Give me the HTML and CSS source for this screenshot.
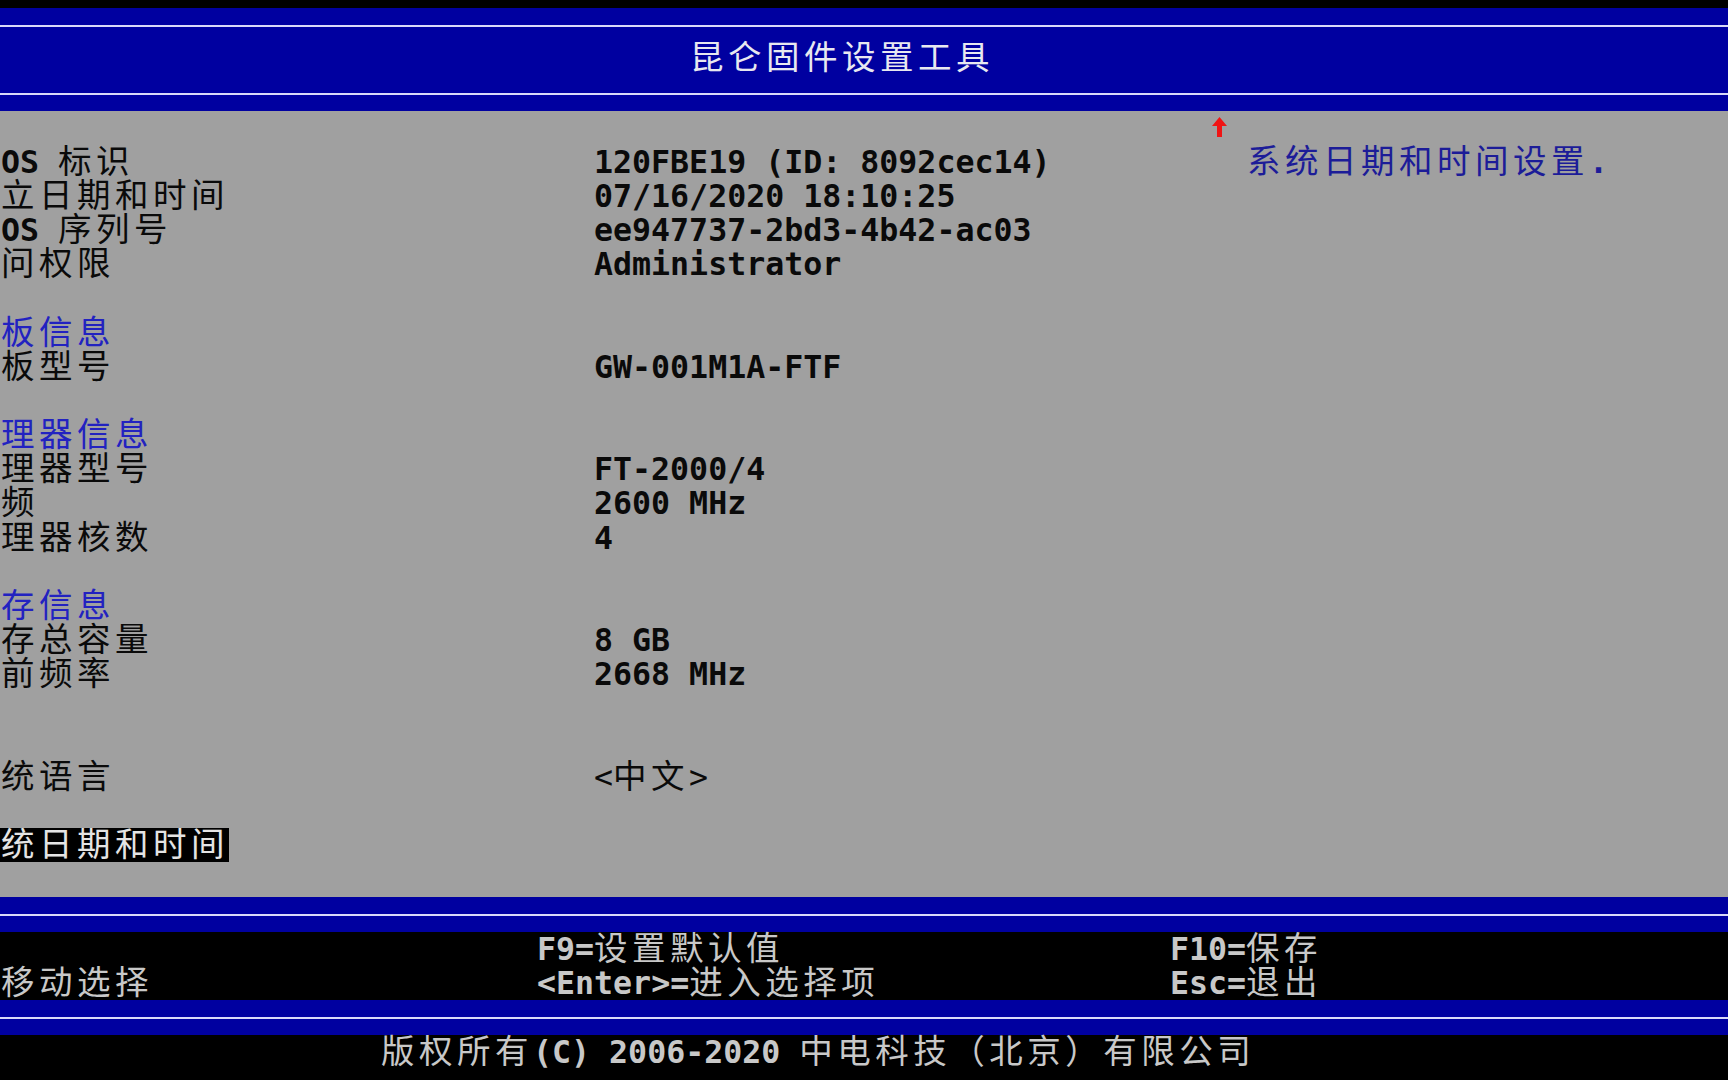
FILE: index.html
```html
<!DOCTYPE html>
<html lang="zh-CN"><head>
  <meta charset="utf-8">
  <title>昆仑固件设置工具</title>
  <link rel="stylesheet" href="styles.css">
</head>
<body>

<div class="screen">
<div class="top-edge"></div>

<header class="title-bar">
  <h1 class="cjk">昆仑固件设置工具</h1>
</header>

<main class="setup">
  <div class="items">
    <div class="label">BIOS <span class="cjk">标识</span></div><div class="value">120FBE19 (ID: 8092cec14)</div>
    <div class="label cjk">建立日期和时间</div><div class="value">07/16/2020 18:10:25</div>
    <div class="label">BIOS <span class="cjk">序列号</span></div><div class="value">ee947737-2bd3-4b42-ac03</div>
    <div class="label cjk">访问权限</div><div class="value">Administrator</div>
    <div class="gap"></div>

    <div class="heading cjk">主板信息</div>
    <div class="label cjk">主板型号</div><div class="value">GW-001M1A-FTF</div>
    <div class="gap"></div>

    <div class="heading cjk">处理器信息</div>
    <div class="label cjk">处理器型号</div><div class="value">FT-2000/4</div>
    <div class="label cjk">主频</div><div class="value">2600 MHz</div>
    <div class="label cjk">处理器核数</div><div class="value">4</div>
    <div class="gap"></div>

    <div class="heading cjk">内存信息</div>
    <div class="label cjk">内存总容量</div><div class="value">8 GB</div>
    <div class="label cjk">当前频率</div><div class="value">2668 MHz</div>
    <div class="gap"></div>
    <div class="gap"></div>

    <div class="label cjk">系统语言</div><div class="value"><span class="thin">&lt;</span><span class="cjk">中文</span><span class="thin">&gt;</span></div>
    <div class="gap"></div>

    <div class="label cjk selected">系统日期和时间</div>
  </div>

  <aside class="help">
    <svg class="scroll-up" viewBox="0 0 15 20"><polygon points="7.5,0 15,9 10,9 10,20 5,20 5,9 0,9" fill="#f01414"/></svg>
    <p><span class="cjk">系统日期和时间设置</span>.</p>
  </aside>
</main>

<footer>
  <div class="band"></div>
  <div class="keys">
    <div></div>
    <div>F9=<span class="cjk">设置默认值</span></div>
    <div>F10=<span class="cjk">保存</span></div>
    <div>&#8593;&#8595;<span class="cjk">移动选择</span></div>
    <div>&lt;Enter&gt;=<span class="cjk">进入选择项</span></div>
    <div>Esc=<span class="cjk">退出</span></div>
  </div>
  <div class="band"></div>
  <div class="copyright"><span class="cjk">版权所有</span>(C) 2006-2020 <span class="cjk">中电科技（北京）有限公司</span></div>
</footer>
</div>

</body></html>
```

FILE: styles.css
```css
html, body { margin:0; padding:0; background:black; }

body {
  width: 1728px;
  height: 1080px;
  overflow: hidden;
  font: bold 31.6px/34.15px "DejaVu Sans Mono", "Noto Sans CJK SC", monospace;
  color: #0a0a0a;
}

/* double-width cells: 2 x 19px per ideograph */
.cjk {
  font-weight: normal;
  font-size: 33.5px;
  letter-spacing: 4.5px;
}
.thin { font-weight: normal; }

.top-edge {
  height: 8px;
  background: black;
}

.title-bar {
  background: #0000a0;
  padding: 17px 0 16px;
}
.title-bar h1 {
  margin: 0;
  height: 66px;
  border-top: 2px solid #d8d8f8;
  border-bottom: 2px solid #d8d8f8;
  padding-left: 690px;
  line-height: 62px;
  color: #e8e8f0;
}

.setup {
  display: flex;
  height: 786px;
  background: #a0a0a0;
}

.items {
  flex: none;
  width: 1249px;
  margin-left: -37px;
  padding-top: 34px;
  display: grid;
  grid-template-columns: 631px 1fr;
  grid-auto-rows: 34.15px;
  align-content: start;
}
.gap, .heading {
  grid-column: 1 / -1;
}
.heading {
  color: #2222c0;
}
.selected {
  justify-self: start;
  background: black;
  color: #e4e4e4;
}

.help {
  flex: 1;
  padding-top: 6px;
  color: #1c1c98;
}
.scroll-up {
  display: block;
  width: 15px;
  height: 20px;
}
.help p {
  margin: 8px 0 0;
  padding-left: 35px;
  height: 34.15px;
}

.band {
  height: 35px;
  background: linear-gradient(#0000a0 17px, #d8d8f8 17px 19px, #0000a0 19px);
}

.keys {
  display: grid;
  grid-template-columns: 574px 633px 1fr;
  grid-auto-rows: 34px;
  margin-left: -37px;
  color: #c8c8c8;
  line-height: 34px;
}

.copyright {
  height: 45px;
  padding-left: 381px;
  color: #c8c8c8;
  line-height: 34px;
}
```
